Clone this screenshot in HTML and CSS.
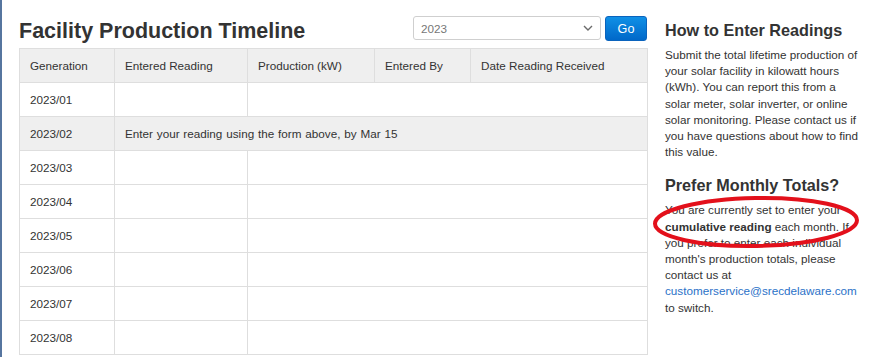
FILE: index.html
```html
<!DOCTYPE html>
<html lang="en">
<head>
  <meta charset="UTF-8">
  <meta name="viewport" content="width=device-width, initial-scale=1.0">
  <title>Facility Production Timeline</title>
  <link rel="stylesheet" href="styles.css">
</head>
<body>
  <div class="page">
    <div class="timeline">
      <div class="timeline-top">
        <h1 class="timeline-title">Facility Production Timeline</h1>
        <form class="year-form">
          <div class="year-select">
            <select name="year">
              <option>2023</option>
            </select>
            <svg class="year-chevron" width="10" height="6" viewBox="0 0 10 6">
              <path d="M1 1 L5 5 L9 1" fill="none" stroke="#6b6b6b" stroke-width="1.4"/>
            </svg>
          </div>
          <button type="button" class="go-button">Go</button>
        </form>
      </div>

      <table class="readings">
        <colgroup>
          <col style="width:95px">
          <col style="width:133px">
          <col style="width:127px">
          <col style="width:96px">
          <col style="width:177px">
        </colgroup>
        <thead>
          <tr>
            <th>Generation</th>
            <th>Entered Reading</th>
            <th>Production (kW)</th>
            <th>Entered By</th>
            <th>Date Reading Received</th>
          </tr>
        </thead>
        <tbody>
          <tr><td>2023/01</td><td></td><td colspan="3"></td></tr>
          <tr class="current"><td>2023/02</td><td colspan="4">Enter your reading using the form above, by Mar 15</td></tr>
          <tr><td>2023/03</td><td></td><td colspan="3"></td></tr>
          <tr><td>2023/04</td><td></td><td colspan="3"></td></tr>
          <tr><td>2023/05</td><td></td><td colspan="3"></td></tr>
          <tr><td>2023/06</td><td></td><td colspan="3"></td></tr>
          <tr><td>2023/07</td><td></td><td colspan="3"></td></tr>
          <tr><td>2023/08</td><td></td><td colspan="3"></td></tr>
        </tbody>
      </table>
    </div>

    <div class="sidebar">
      <h2 class="sidebar-title">How to Enter Readings</h2>
      <p class="sidebar-text">Submit the total lifetime production of your solar facility in kilowatt hours (kWh). You can report this from a solar meter, solar inverter, or online solar monitoring. Please contact us if you have questions about how to find this value.</p>

      <h2 class="sidebar-title">Prefer Monthly Totals?</h2>
      <p class="sidebar-text">You are currently set to enter your <strong>cumulative reading</strong> each month. If you prefer to enter each individual month's production totals, please contact us at <a href="#">customerservice@srecdelaware.com</a> to switch.</p>

      <!-- red marker drawn over the text -->
      <svg class="marker" width="210" height="56" viewBox="0 0 210 56">
        <ellipse cx="105" cy="28" rx="101" ry="24" fill="none" stroke="#e3101b" stroke-width="4" transform="rotate(-1 105 28)"/>
      </svg>
    </div>
  </div>
</body>
</html>
```

FILE: styles.css
```css
body {
  margin: 0;
  font-family: "Liberation Sans", Arial, sans-serif;
  color: #333;
  background: #fff;
}

.page {
  display: flex;
  align-items: flex-start;
  min-height: 357px;
  box-sizing: border-box;
  border-left: 2px solid #56759f;
  padding: 16px 0 0 17px;
}

.timeline {
  width: 628px;
}

.timeline-top {
  display: flex;
  justify-content: space-between;
  align-items: flex-start;
  margin-bottom: 5px;
}

.timeline-title {
  margin: 3px 0 0;
  font-size: 21.5px;
  line-height: 24px;
  font-weight: 700;
  color: #333;
}

.year-form {
  display: flex;
  gap: 4px;
}

.year-select {
  position: relative;
}

.year-select select {
  appearance: none;
  -webkit-appearance: none;
  width: 188px;
  height: 24px;
  margin: 0;
  padding: 0 7px;
  border: 1px solid #cfcfcf;
  border-radius: 3px;
  background: #fff;
  font-family: inherit;
  font-size: 11.7px;
  color: #777;
}

.year-chevron {
  position: absolute;
  right: 8px;
  top: 9px;
  pointer-events: none;
}

.go-button {
  width: 42px;
  height: 25px;
  margin: 0;
  padding: 0;
  border: 1px solid #0a63bd;
  border-radius: 3px;
  background: linear-gradient(#1090e6, #0068c9);
  color: #fff;
  font-family: inherit;
  font-size: 12.6px;
  cursor: pointer;
}

.readings {
  width: 628px;
  table-layout: fixed;
  border-collapse: collapse;
  font-size: 11.7px;
  color: #333;
}

.readings th,
.readings td {
  height: 34px;
  padding: 0 10px;
  border: 1px solid #dedede;
  text-align: left;
  vertical-align: middle;
  box-sizing: border-box;
}

.readings th {
  font-weight: 400;
  background: #efefef;
}

.readings .current td {
  background: #efefef;
  word-spacing: 0.6px;
}

.sidebar {
  position: relative;
  width: 196px;
  margin-left: 18px;
}

.sidebar-title {
  margin: 4px 0 7px;
  font-size: 16.2px;
  line-height: 20px;
  font-weight: 700;
  color: #333;
}

.sidebar-text {
  margin: 0 0 15px;
  font-size: 11.7px;
  line-height: 16.2px;
}

.sidebar-text + .sidebar-title {
  margin-top: 0;
}

.sidebar-text a {
  color: #2b72c8;
  text-decoration: none;
}

.marker {
  position: absolute;
  left: -14px;
  top: 178px;
}
```
